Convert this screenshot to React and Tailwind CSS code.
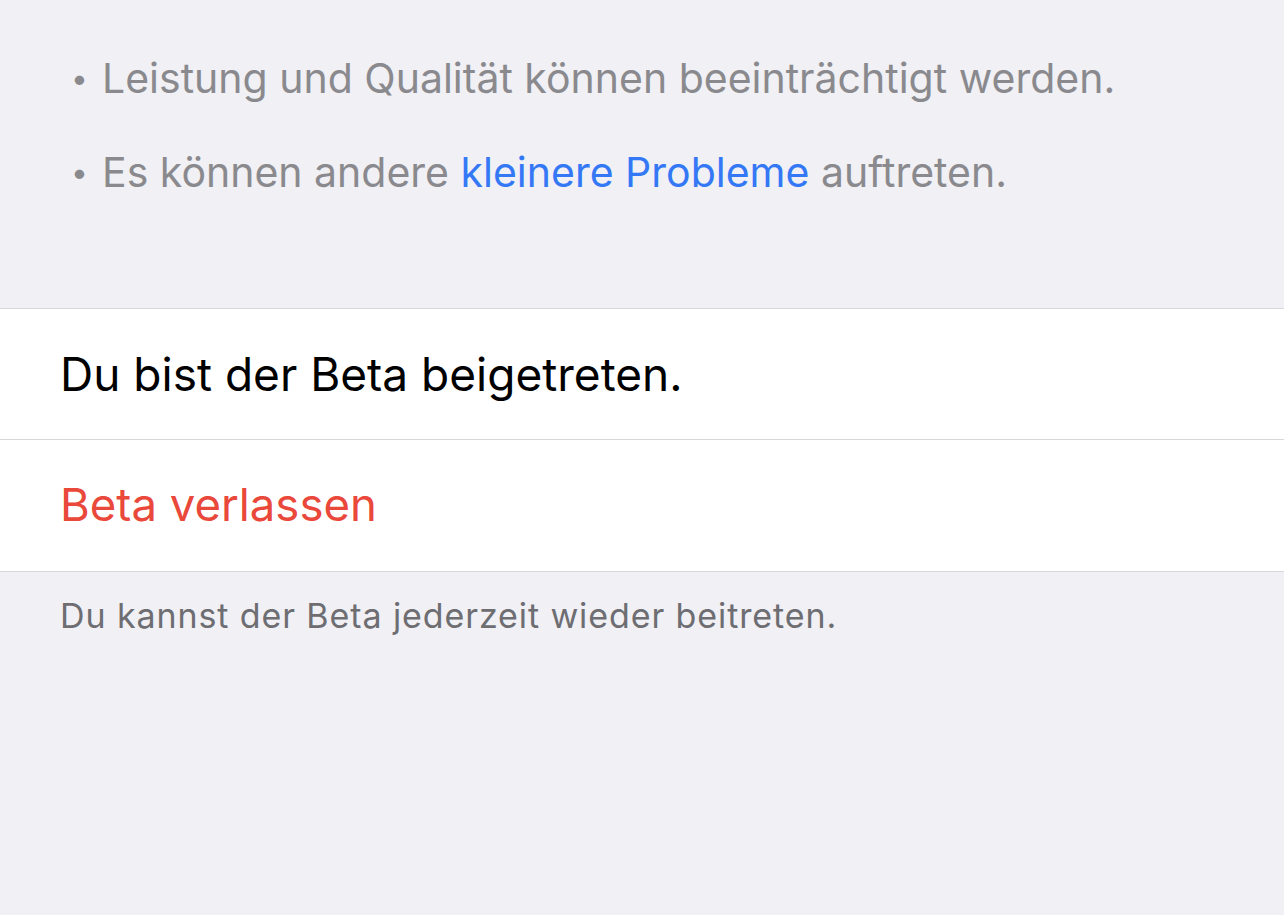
export default function App() {
  const font = { fontFamily: 'Inter, "Noto Sans", sans-serif' };
  return (
    <div className="w-[1284px] h-[915px] bg-[#f0f0f5] overflow-hidden" style={font}>
      <ul className="pt-[31px] h-[308px] pl-[71px] text-[41px] leading-[94px] text-[#8a8a8e]">
        <li className="flex items-center">
          <span className="w-[31px] text-[30px]">•</span>
          <span>Leistung und Qualität können beeinträchtigt werden.</span>
        </li>
        <li className="flex items-center">
          <span className="w-[31px] text-[30px]">•</span>
          <span>
            Es können andere <span className="text-[#3478f6]">kleinere Probleme</span> auftreten.
          </span>
        </li>
      </ul>
      <div className="bg-white border-t border-b border-[#d8d8dc]">
        <div className="h-[131px] flex items-center pl-[60px] text-[46px] text-black border-b border-[#d8d8dc]">
          Du bist der Beta beigetreten.
        </div>
        <div className="h-[131px] flex items-center pl-[60px] text-[45.5px] text-[#e9483a]">
          Beta verlassen
        </div>
      </div>
      <div className="pl-[60px] pt-[18px] text-[34px] tracking-[0.9px] text-[#6d6d72]">
        Du kannst der Beta jederzeit wieder beitreten.
      </div>
    </div>
  );
}
